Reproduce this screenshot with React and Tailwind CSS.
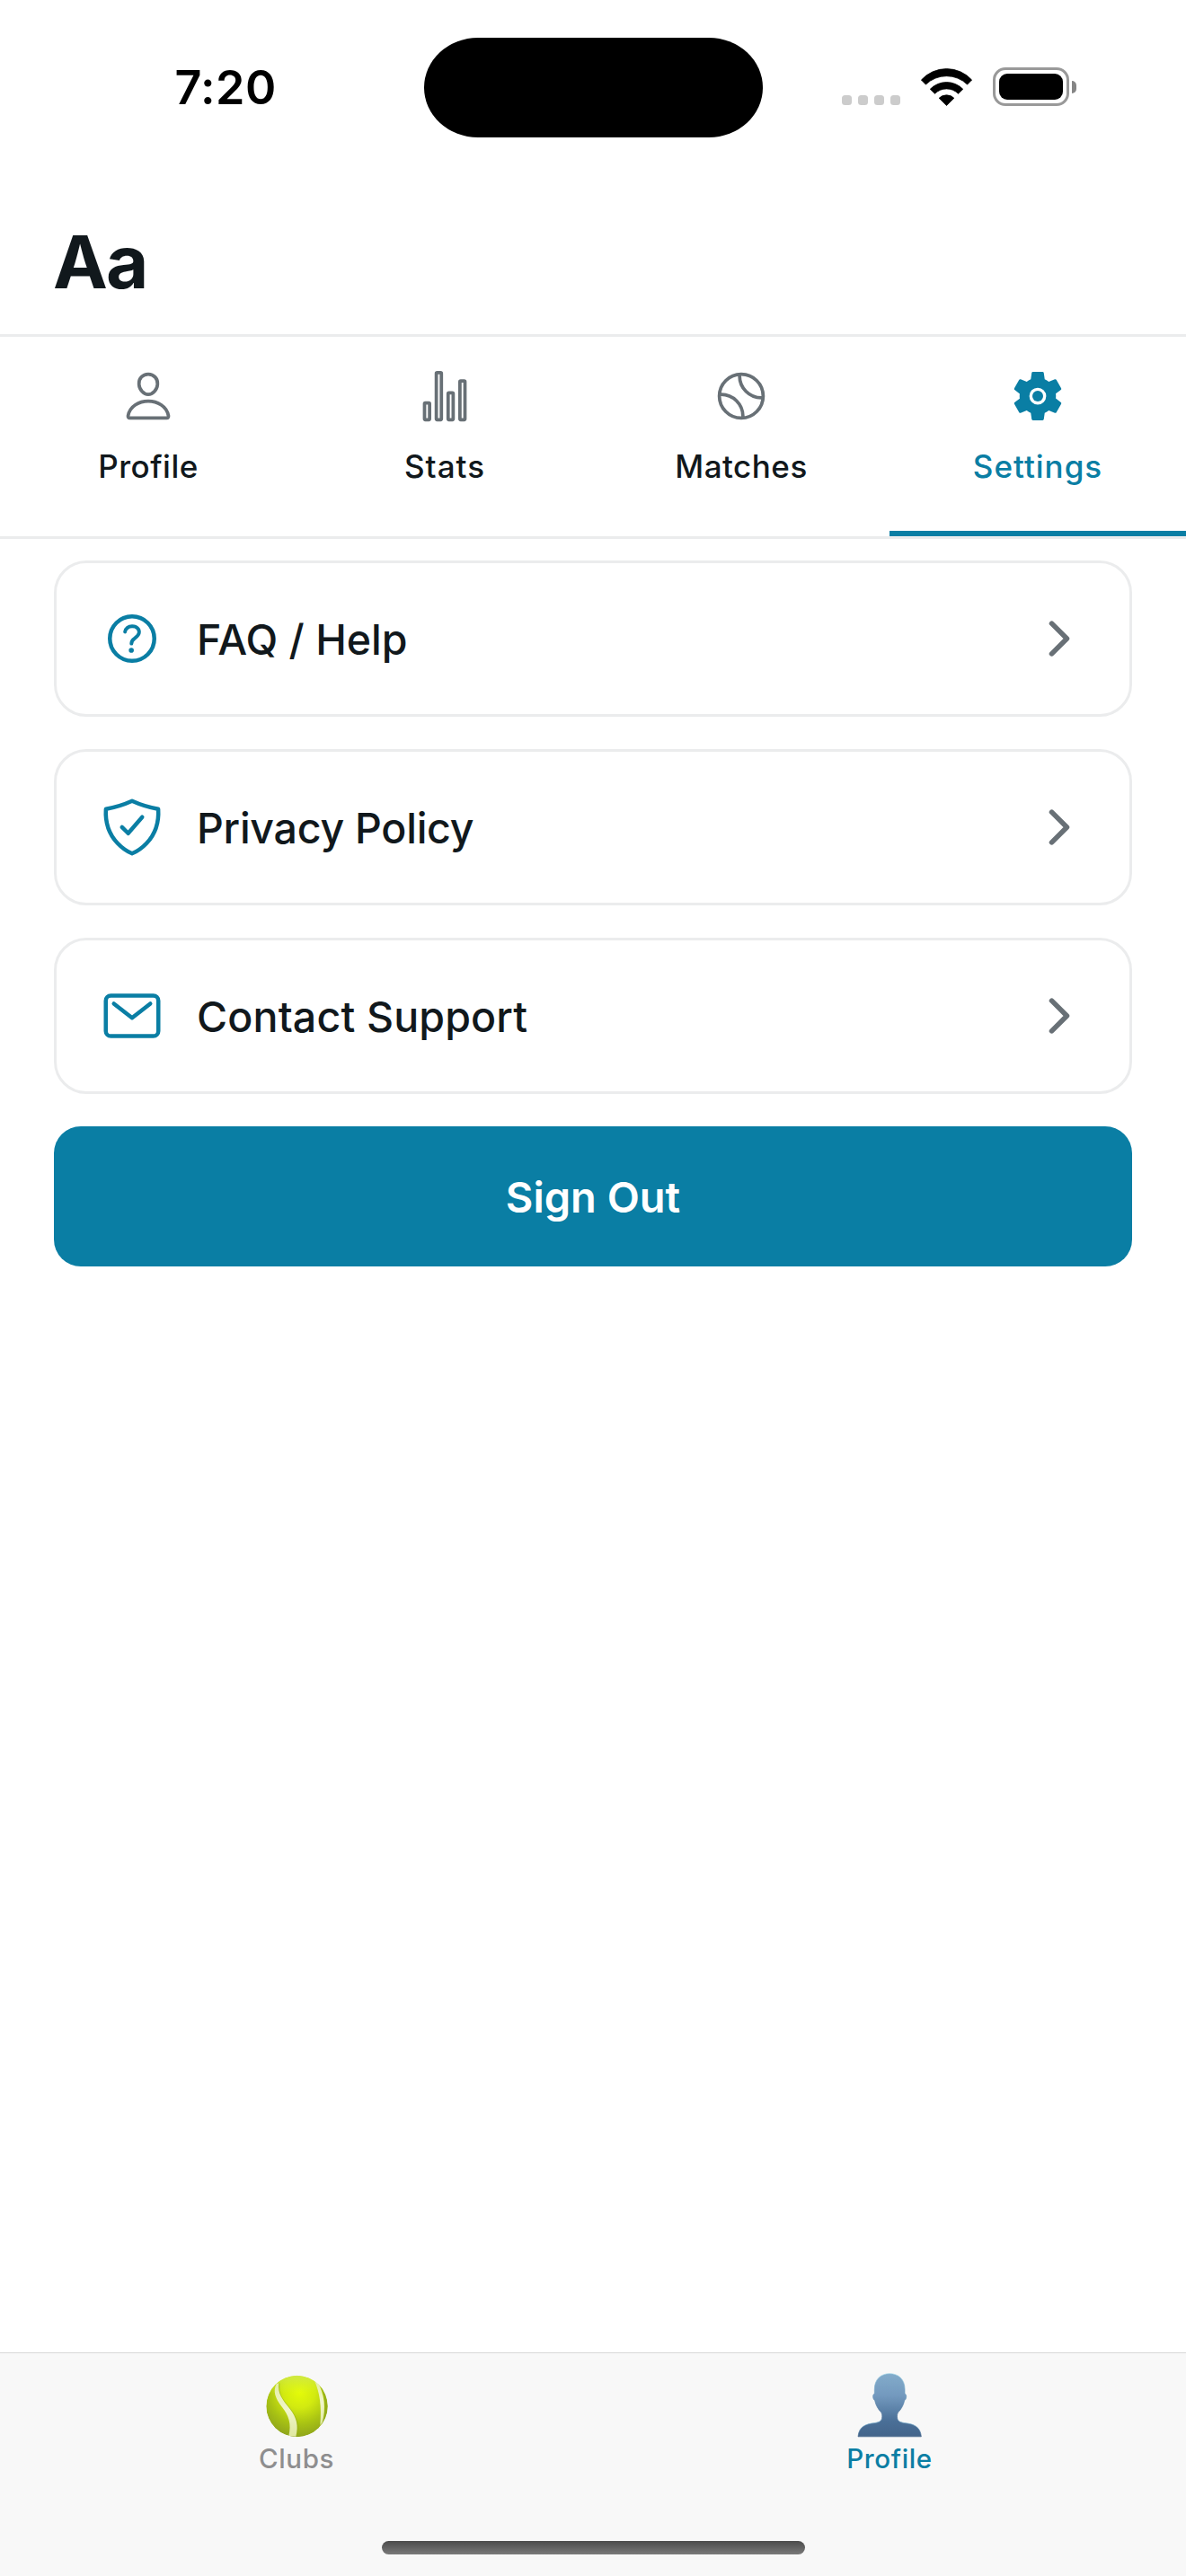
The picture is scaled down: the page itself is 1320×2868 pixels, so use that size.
import {
  IoPersonOutline,
  IoStatsChartOutline,
  IoTennisballOutline,
  IoSettingsSharp,
  IoHelpCircleOutline,
  IoShieldCheckmarkOutline,
  IoMailOutline,
  IoChevronForward,
} from "react-icons/io5";

function GearIcon({ className }) {
  return (
    <span className={`relative flex items-center justify-center ${className}`}>
      <IoSettingsSharp className="size-full" />
      <span className="absolute size-[11.5px] rounded-full bg-current" />
    </span>
  );
}

const TABS = [
  { label: "Profile", Icon: IoPersonOutline, spacing: "tracking-[0.5px]" },
  { label: "Stats", Icon: IoStatsChartOutline, spacing: "tracking-[1px]" },
  { label: "Matches", Icon: IoTennisballOutline, spacing: "tracking-[0.5px]" },
  { label: "Settings", Icon: GearIcon, spacing: "tracking-[1px]", active: true },
];

const ROWS = [
  { label: "FAQ / Help", Icon: IoHelpCircleOutline, spacing: "tracking-[0px]" },
  { label: "Privacy Policy", Icon: IoShieldCheckmarkOutline, spacing: "tracking-[-0.25px]" },
  { label: "Contact Support", Icon: IoMailOutline, spacing: "tracking-[0.16px]" },
];

function WifiIcon() {
  return (
    <svg
      className="ml-[22px] h-[44px] w-[60px]"
      viewBox="1024 74 60 44"
      fill="#000"
      stroke="#000"
      strokeWidth="0.8"
      strokeLinejoin="round"
    >
      <path d="M1025.4 88A38 38 0 0 1 1081.6 88L1076.6 93.1A33 33 0 0 0 1030.4 93.1Z" />
      <path d="M1035.3 98.2A25.5 25.5 0 0 1 1071.7 98.2L1066.5 103.3A18.3 18.3 0 0 0 1040.5 103.3Z" />
      <path d="M1045.2 108.2A12 12 0 0 1 1061.8 108.2L1053.5 116.6Z" />
    </svg>
  );
}

function Battery() {
  return (
    <div className="ml-[21px] flex items-center gap-[3px]">
      <div className="h-[43px] w-[85px] rounded-[14px] border-[3px] border-[#999999] p-1">
        <div className="h-full w-full rounded-[9px] bg-black" />
      </div>
      <div className="h-[14px] w-[5px] rounded-r-[7px] bg-[#858585]" />
    </div>
  );
}

function StatusBar() {
  return (
    <div className="grid h-[196px] grid-cols-[471.5px_377px_1fr] items-center">
      <span className="pl-[194.5px] text-[52px] leading-none font-semibold tracking-[0.4px] text-black">
        7:20
      </span>
      <div className="mb-[2px] h-[111px] rounded-[60px/55.5px] bg-black" />
      <div className="mb-[3px] flex items-center pl-[88.5px]">
        <div className="mt-[30px] flex gap-[6.7px]">
          {[0, 1, 2, 3].map((dot) => (
            <span key={dot} className="h-[11px] w-[11.3px] rounded-[3.5px] bg-[#cccccc]" />
          ))}
        </div>
        <WifiIcon />
        <Battery />
      </div>
    </div>
  );
}

function TennisBall() {
  return (
    <svg className="size-[72px] overflow-visible" viewBox="162 129 216 216">
      <defs>
        <radialGradient id="ball" gradientUnits="userSpaceOnUse" cx="280" cy="190" r="150">
          <stop offset="0" stopColor="#e4fb08" />
          <stop offset="0.35" stopColor="#d2ea10" />
          <stop offset="0.7" stopColor="#a9c313" />
          <stop offset="1" stopColor="#8fa51c" />
        </radialGradient>
        <linearGradient id="gloss" x1="0" y1="0" x2="0" y2="1">
          <stop offset="0" stopColor="#cfe84c" stopOpacity="0.9" />
          <stop offset="0.3" stopColor="#dcf52a" stopOpacity="0" />
        </linearGradient>
        <linearGradient id="seam" x1="0" y1="0" x2="0" y2="1">
          <stop offset="0" stopColor="#e3eda6" />
          <stop offset="0.5" stopColor="#f1f6cb" />
          <stop offset="1" stopColor="#dfe8a0" />
        </linearGradient>
        <clipPath id="ballClip">
          <circle cx="271.5" cy="237" r="102.5" />
        </clipPath>
      </defs>
      <g clipPath="url(#ballClip)">
        <circle cx="271.5" cy="237" r="103" fill="url(#ball)" />
        <circle cx="271.5" cy="237" r="103" fill="url(#gloss)" />
        <path
          d="M336 150C366 190 372 245 354 300L390 290V150Z"
          fill="#8ba51a"
          opacity="0.7"
        />
        <path
          d="M212 160C207 196 222 215 247 245C270 274 280 300 271 334"
          fill="none"
          stroke="#97af12"
          strokeWidth="5"
          opacity="0.6"
        />
        <path
          d="M203 162C191 188 198 208 222 240C244 268 254 296 244 336L268 338C278 302 270 274 248 246C224 216 206 196 211 160Z"
          fill="url(#seam)"
        />
        <path
          d="M329 150C349 192 354 240 349 300L356 292C369 244 364 196 338 152Z"
          fill="url(#seam)"
        />
      </g>
    </svg>
  );
}

function Silhouette() {
  return (
    <svg className="size-[72px] overflow-visible" viewBox="222 129 216 216">
      <defs>
        <linearGradient id="bust" gradientUnits="userSpaceOnUse" x1="0" y1="127" x2="0" y2="340">
          <stop offset="0" stopColor="#83accb" />
          <stop offset="0.35" stopColor="#7399be" />
          <stop offset="0.75" stopColor="#4a6f97" />
          <stop offset="1" stopColor="#43648a" />
        </linearGradient>
        <linearGradient id="bustEdge" gradientUnits="userSpaceOnUse" x1="0" y1="127" x2="0" y2="340">
          <stop offset="0" stopColor="#9bd3e6" />
          <stop offset="0.3" stopColor="#6f9dbf" />
          <stop offset="0.7" stopColor="#486c94" />
          <stop offset="0.78" stopColor="#86bcd8" />
          <stop offset="0.9" stopColor="#5684ab" />
          <stop offset="1" stopColor="#3c5c83" />
        </linearGradient>
      </defs>
      <path
        d="M330.5 128C301 128 280 147 280 180V195C273 197 273 212 281 218C284 233 292 247 301 256C306 262 306 270 305 277C303 287 294 291 281 292.5C248 296 228 306 225 338.500H436C433 306 413 296 380 292.5C367 291 358 287 356 277C355 270 355 262 360 256C369 247 377 233 380 218C388 212 388 197 381 195V180C381 147 360 128 330.5 128Z"
        fill="url(#bust)"
        stroke="url(#bustEdge)"
        strokeWidth="2"
      />
    </svg>
  );
}

export default function App() {
  return (
    <div className="flex h-[2868px] w-[1320px] flex-col bg-white font-['Inter',sans-serif] text-[#11181c]">
      <StatusBar />

      <header className="flex h-[179px] items-center border-b-[3px] border-[#ebeced] px-[59px] pt-[16px]">
        <h1 className="text-[81.6px] leading-none font-bold tracking-[-1.9px]">Aa</h1>
      </header>

      <nav className="grid h-[225px] grid-cols-4 border-b-[3px] border-[#ebeced]">
        {TABS.map(({ label, Icon, spacing, active }) => (
          <button
            key={label}
            className={
              active
                ? "flex flex-col items-center border-b-[6px] border-[#0a7ea4] pt-[36px] text-[#0a7ea4]"
                : "flex flex-col items-center border-b-[6px] border-transparent pt-[36px]"
            }
          >
            <Icon className={active ? "size-[60px]" : "size-[60px] text-[#687076]"} />
            <span className={`mt-[24px] text-[35px] leading-[48px] font-medium ${spacing}`}>{label}</span>
          </button>
        ))}
      </nav>

      <main className="flex flex-1 flex-col gap-[36px] px-[60px] pt-[24px]">
        {ROWS.map(({ label, Icon, spacing }) => (
          <button
            key={label}
            className="flex h-[174px] items-center rounded-[36px] border-[3px] border-[#ebeced] px-[48px]"
          >
            <Icon className="size-[72px] text-[#0a7ea4]" />
            <span className={`ml-[36px] pt-[2px] text-[46.5px] leading-none font-medium ${spacing}`}>
              {label}
            </span>
            <IoChevronForward className="ml-auto size-[60px] text-[#687076]" />
          </button>
        ))}
        <button className="h-[156px] rounded-[30px] bg-[#0a7ea4] text-[47px] leading-none font-semibold text-white">
          Sign Out
        </button>
      </main>

      <footer className="flex h-[249px] flex-col items-center border-t border-[#d8d8d8] bg-[#f8f8f8]">
        <div className="grid w-full grid-cols-2 pt-[23px]">
          <div className="flex flex-col items-center text-[#8e8e8f]">
            <TennisBall />
            <span className="mt-[4px] text-[29.5px] leading-[36px] font-medium tracking-[0.6px]">Clubs</span>
          </div>
          <div className="flex flex-col items-center text-[#0a7ea4]">
            <Silhouette />
            <span className="mt-[4px] text-[29.5px] leading-[36px] font-medium tracking-[0.65px]">Profile</span>
          </div>
        </div>
        <div className="mt-auto mb-[24px] h-[15px] w-[471px] rounded-[7.5px] bg-linear-to-b from-[#4b4b4b] to-[#7a7a7a]" />
      </footer>
    </div>
  );
}
